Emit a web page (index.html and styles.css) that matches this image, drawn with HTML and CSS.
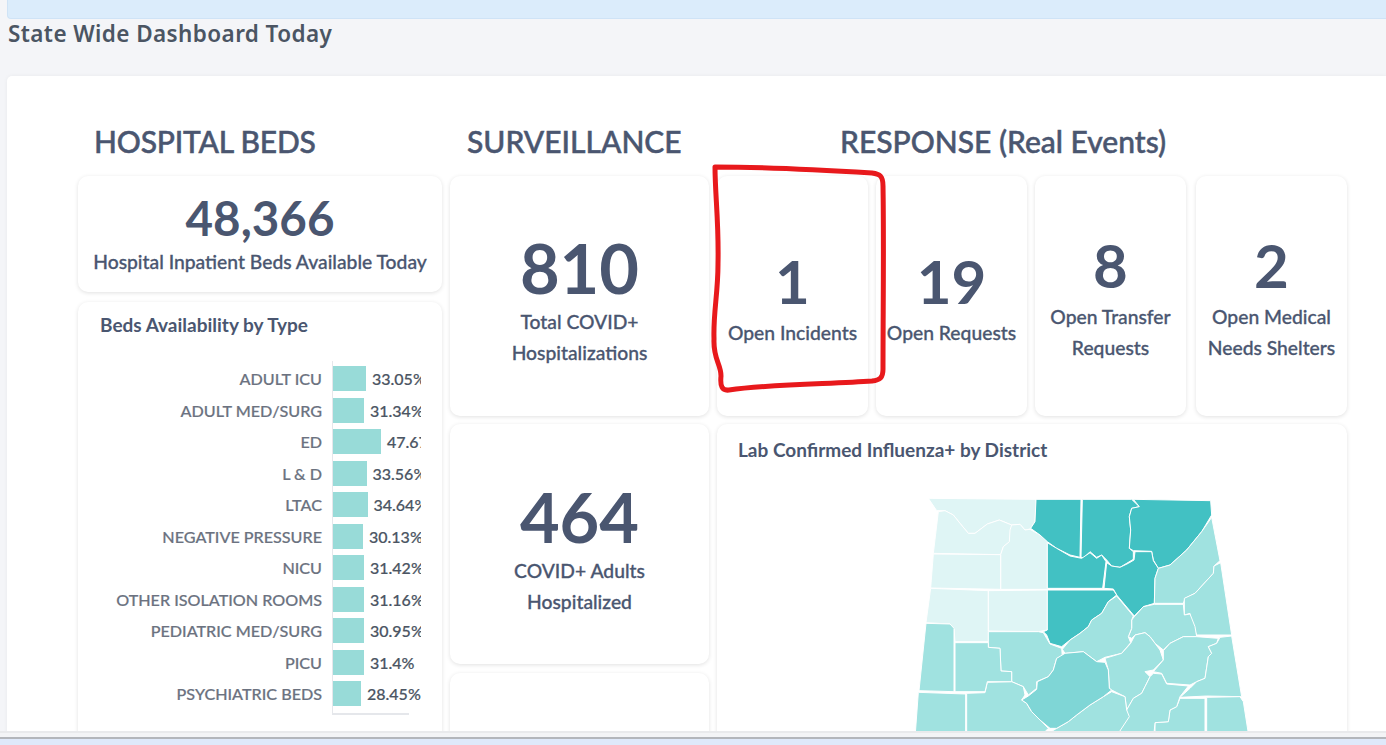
FILE: index.html
```html
<!DOCTYPE html>
<html lang="en">
<head>
<meta charset="utf-8">
<title>State Wide Dashboard Today</title>
<link rel="stylesheet" href="styles.css">
</head>
<body>
<main class="page">
  <div class="banner"></div>
  <h1 class="title">State Wide Dashboard Today</h1>
  <section class="panel">
    <div class="col col-beds">
      <h2 class="heading heading-beds">HOSPITAL BEDS</h2>
      <div class="card beds-total">
        <div class="num num-md">48,366</div>
        <div class="label">Hospital Inpatient Beds Available Today</div>
      </div>
      <div class="card beds-chart">
        <h3 class="card-title">Beds Availability by Type</h3>
        <div class="chart">
          <div class="bar-row"><span class="bar-name">ADULT ICU</span><span class="bar-track"><i class="bar" style="width:33px"></i><span class="bar-val">33.05%</span></span></div>
          <div class="bar-row"><span class="bar-name">ADULT MED/SURG</span><span class="bar-track"><i class="bar" style="width:31px"></i><span class="bar-val">31.34%</span></span></div>
          <div class="bar-row"><span class="bar-name">ED</span><span class="bar-track"><i class="bar" style="width:48px"></i><span class="bar-val">47.67%</span></span></div>
          <div class="bar-row"><span class="bar-name">L &amp; D</span><span class="bar-track"><i class="bar" style="width:33.5px"></i><span class="bar-val">33.56%</span></span></div>
          <div class="bar-row"><span class="bar-name">LTAC</span><span class="bar-track"><i class="bar" style="width:34.5px"></i><span class="bar-val">34.64%</span></span></div>
          <div class="bar-row"><span class="bar-name">NEGATIVE PRESSURE</span><span class="bar-track"><i class="bar" style="width:30px"></i><span class="bar-val">30.13%</span></span></div>
          <div class="bar-row"><span class="bar-name">NICU</span><span class="bar-track"><i class="bar" style="width:31px"></i><span class="bar-val">31.42%</span></span></div>
          <div class="bar-row"><span class="bar-name">OTHER ISOLATION ROOMS</span><span class="bar-track"><i class="bar" style="width:31px"></i><span class="bar-val">31.16%</span></span></div>
          <div class="bar-row"><span class="bar-name">PEDIATRIC MED/SURG</span><span class="bar-track"><i class="bar" style="width:31px"></i><span class="bar-val">30.95%</span></span></div>
          <div class="bar-row"><span class="bar-name">PICU</span><span class="bar-track"><i class="bar" style="width:31px"></i><span class="bar-val">31.4%</span></span></div>
          <div class="bar-row"><span class="bar-name">PSYCHIATRIC BEDS</span><span class="bar-track"><i class="bar" style="width:28px"></i><span class="bar-val">28.45%</span></span></div>
        </div>
      </div>
    </div>
    <div class="col col-surv">
      <h2 class="heading">SURVEILLANCE</h2>
      <div class="card stat-tall">
        <div class="num num-xl">810</div>
        <div class="label label-lg">Total COVID+<br>Hospitalizations</div>
      </div>
      <div class="card stat-tall stat-low">
        <div class="num num-xl">464</div>
        <div class="label label-lg">COVID+ Adults<br>Hospitalized</div>
      </div>
      <div class="card stat-tall"></div>
    </div>
    <div class="col col-resp">
      <h2 class="heading heading-resp">RESPONSE (Real Events)</h2>
      <div class="resp-row">
        <div class="card stat-small"><div class="num num-lg">1</div><div class="label label-lg">Open Incidents</div></div>
        <div class="card stat-small"><div class="num num-lg">19</div><div class="label label-lg">Open Requests</div></div>
        <div class="card stat-small"><div class="num num-lg">8</div><div class="label label-lg">Open Transfer<br>Requests</div></div>
        <div class="card stat-small"><div class="num num-lg">2</div><div class="label label-lg">Open Medical<br>Needs Shelters</div></div>
      </div>
      <div class="card map-card">
        <h3 class="card-title">Lab Confirmed Influenza+ by District</h3>
        <svg class="map" viewBox="0 0 1110 795" aria-hidden="true">
          <g class="c-light">
            <path d="M85 55L408 58L405 125L390 147L375 150L360 133L335 135L298 120L262 132L225 160L205 160L180 130L160 105L135 92L110 92Z"/>
            <path d="M115 95L135 92L160 105L180 130L205 160L225 160L262 132L298 120L335 135L330 185L310 200L302 224L100 220Z"/>
            <path d="M335 135L360 133L375 150L390 148L420 165L442 185L442 328L302 328L302 224L310 200L328 185L330 150Z"/>
            <path d="M100 222L302 224L302 328L92 324Z"/>
            <path d="M92 325L265 332L265 485L165 485L162 445L150 432L78 428Z"/>
            <path d="M265 332L442 330L442 450L415 455L265 453Z"/>
          </g>
          <g class="c-dark">
            <path d="M408 58L543 58L540 232L510 225L470 205L442 185L420 165L392 145L405 125Z"/>
            <path d="M547 58L695 58L718 80L695 85L688 110L692 150L688 205L700 215L700 238L680 250L660 262L635 258L620 240L605 225L590 232L570 215L552 233L543 232Z"/>
            <path d="M700 58L932 62L935 105L905 155L860 210L810 255L775 265L760 240L755 214L700 212L688 205L692 150L688 110L695 85L718 80Z"/>
            <path d="M442 188L470 205L510 228L545 235L570 218L590 235L605 225L618 245L608 325L442 325Z"/>
            <path d="M620 248L635 258L660 262L685 250L702 240L705 215L755 215L760 242L775 265L765 295L763 370L730 380L703 408L675 375L650 345L640 327L612 325Z"/>
            <path d="M442 330L640 330L650 345L625 365L605 400L575 420L565 440L540 460L510 480L485 500L450 490L440 465L430 455L442 450Z"/>
          </g>
          <g class="c-mid">
            <path d="M935 112L960 242L942 258L940 280L885 340L855 355L850 370L763 370L765 295L775 265L810 255L860 210L905 155Z"/>
            <path d="M962 248L995 465L890 465L870 415L870 400L853 405L853 355L885 340L940 280L942 258Z"/>
            <path d="M703 410L730 380L763 373L850 373L853 405L870 402L885 440L890 470L850 470L830 480L810 490L790 510L765 490L750 470L735 458L705 465L695 475L685 470L695 445L695 420Z"/>
            <path d="M650 348L700 408L695 420L695 445L685 470L692 488L665 520L615 532L590 545L550 515L495 520L487 508L510 480L540 460L565 440L575 420L605 400L625 365Z"/>
            <path d="M265 455L415 455L430 458L440 475L450 492L485 505L487 530L470 535L460 570L445 590L410 605L410 625L385 645L370 620L335 605L335 575L303 573L300 505L265 502Z"/>
            <path d="M615 535L665 520L692 490L705 465L735 458L750 470L765 490L780 510L790 540L760 570L735 575L750 590L735 620L725 640L700 655L680 690L675 650L635 630L628 625L625 570Z"/>
            <path d="M790 512L810 490L830 480L850 470L890 470L955 475L950 490L925 500L935 520L925 530L915 595L890 605L870 615L800 610L785 580L760 575L790 540Z"/>
            <path d="M960 472L995 468L1025 650L920 648L840 652L870 625L890 605L915 595L925 530L935 520L925 500L950 490Z"/>
            <path d="M920 652L1020 650L1030 665L1045 760L920 760Z"/>
            <path d="M840 655L915 655L915 760L765 760L765 728L805 725L810 690L830 680Z"/>
            <path d="M760 580L785 582L800 612L865 618L840 650L830 680L810 690L805 725L765 728L762 760L655 760L680 715L680 690L700 655L725 640L735 620L750 590Z"/>
            <path d="M635 635L675 650L680 690L688 710L655 760L445 760L470 745L505 725L530 705L570 675L610 650Z"/>
            <path d="M200 640L255 638L262 607L335 605L370 620L375 645L365 660L380 670L395 695L420 720L445 745L430 760L200 760Z"/>
            <path d="M165 488L265 488L265 502L300 505L303 573L335 575L335 605L262 605L255 635L165 635Z"/>
            <path d="M78 430L150 432L162 445L162 635L57 632Z"/>
            <path d="M55 637L197 642L197 760L46 760Z"/>
          </g>
          <path class="c-deep" d="M495 520L550 515L590 545L615 547L625 570L628 625L635 630L610 650L570 675L530 705L505 725L470 745L450 745L420 720L395 695L380 670L365 660L385 648L410 628L412 605L445 590L460 570L470 535Z"/>
        </svg>
      </div>
    </div>
    <svg class="scribble" viewBox="0 0 180 230" aria-hidden="true">
      <path d="M3 3C50 3 110 6 160 9C168 10 171 12 171 22C172 80 171 150 171 205C171 214 168 216 160 217C120 220 60 220 17 226C10 227 8 222 9 212C9 200 1 195 2 175C1 150 6 130 6 100C7 60 3 30 3 3Z"/>
    </svg>
  </section>
</main>
<footer class="strip"><span class="strip-line"></span></footer>
</body>
</html>
```
FILE: styles.css
```css
* { box-sizing: border-box; }
html, body { margin: 0; padding: 0; }
body {
  width: 1386px;
  height: 745px;
  overflow: hidden;
  background: #f4f5f8;
  font-family: Lato, "Liberation Sans", sans-serif;
  color: #4a5670;
  display: flex;
  flex-direction: column;
}
.page {
  height: 731px;
  overflow: hidden;
  padding-left: 7px;
  flex: none;
}
.banner {
  height: 19px;
  background: #dbecfb;
  border: 1px solid #cfe3f6;
  border-top: 0;
  border-right: 0;
  border-radius: 0 0 0 4px;
}
.title {
  margin: 0;
  padding-left: 1px;
  height: 57px;
  font-family: "Noto Sans", sans-serif;
  font-size: 22.5px;
  font-weight: 600;
  line-height: 30px;
  color: #4b5563;
  letter-spacing: 0.4px;
  white-space: nowrap;
}
.panel {
  position: relative;
  background: #fff;
  border-radius: 5px 0 0 0;
  height: 700px;
  padding: 47px 39px 0 71px;
  display: flex;
  gap: 8px;
  box-shadow: 0 0 4px rgba(0,0,0,.05);
}
.col { flex: none; display: flex; flex-direction: column; }
.col-beds { width: 364px; }
.col-surv { width: 259px; }
.col-resp { width: 630px; }
.heading {
  flex: none;
  margin: 0 0 0 17px;
  height: 53px;
  font-size: 30px;
  font-weight: 500;
  line-height: 36px;
  color: #4a5670;
  white-space: nowrap;
  -webkit-text-stroke: .5px #4a5670;
}
.heading-beds { margin-left: 16px; letter-spacing: -.2px; }
.heading-resp { margin-left: 123px; }
.card {
  flex: none;
  background: #fff;
  border-radius: 10px;
  box-shadow: 0 1px 4px rgba(0,0,0,.12);
}
.num { font-weight: 700; text-align: center; color: #4a5670; }
.num-md { font-size: 47.5px; line-height: 60px; }
.num-lg { font-size: 60px; line-height: 72px; }
.num-xl { font-size: 68.5px; line-height: 80px; }
.label {
  font-size: 19.3px;
  font-weight: 500;
  text-align: center;
  line-height: 31px;
  color: #4a5670;
  white-space: nowrap;
  -webkit-text-stroke: .3px #4a5670;
}
.beds-total { height: 116px; padding-top: 12px; margin-bottom: 10px; }
.beds-total .label { line-height: 24px; margin-top: 2px; }
.beds-chart { height: 440px; padding: 12px 0 0 22px; }
.card-title { margin: 0; font-size: 19px; font-weight: 700; line-height: 22px; color: #4a5670; }
.chart {
  margin-top: 25px;
  height: 352px;
  padding-top: 2px;
  width: 322px;
  position: relative;
}
.chart::before {
  content: "";
  position: absolute;
  left: 232px;
  top: 0;
  width: 76px;
  height: 352px;
  border-left: 1px solid #e5e7eb;
  border-bottom: 2px solid #e5e7eb;
}
.bar-row { display: flex; height: 31.5px; align-items: center; }
.bar-name {
  width: 222px;
  text-align: right;
  font-size: 16.15px;
  font-weight: 500;
  color: #6b7280;
  white-space: nowrap;
  -webkit-text-stroke: .2px #6b7280;
}
.bar-track {
  margin-left: 11px;
  width: 88px;
  height: 25px;
  display: flex;
  align-items: center;
  overflow: hidden;
  position: relative;
}
.bar { display: block; height: 25px; background: #98dbd8; flex: none; }
.bar-val { margin-left: 6px; font-size: 16px; font-weight: 500; color: #4b5563; white-space: nowrap; -webkit-text-stroke: .2px #4b5563; }
.stat-tall {
  height: 240px;
  margin-bottom: 8px;
  padding-top: 52px;
}
.stat-low { padding-top: 53px; margin-bottom: 9px; }
.stat-tall .label { margin-top: -2px; }
.resp-row { display: flex; gap: 8px; margin-bottom: 8px; }
.stat-small {
  width: 151px;
  height: 240px;
  display: flex;
  flex-direction: column;
  justify-content: center;
}
.stat-small:last-child { margin-left: 2px; }
.map-card { width: 630px; height: 400px; padding: 15px 0 0 21px; }
.map { display: block; width: 370px; height: 265px; margin: 19px 0 0 162px; }
.map path { stroke: #fff; stroke-width: 3; stroke-linejoin: round; }
.c-light path { fill: #dff5f5; }
.c-dark path { fill: #42c1c3; }
.c-mid path { fill: #a0e2e0; }
.c-deep { fill: #7fd6d6; }
.scribble {
  position: absolute;
  left: 705px;
  top: 88px;
  width: 180px;
  height: 230px;
  overflow: visible;
}
.scribble path { fill: none; stroke: #e8191c; stroke-width: 5; stroke-linejoin: round; }
.strip {
  flex: 1;
  background: #dfe9fa;
  border-top: 2px solid #e9eaec;
}
.strip-line { display: block; height: 4px; background: #f3f4f6; border-bottom: 2px solid #b3b6bb; box-sizing: content-box; }
```
